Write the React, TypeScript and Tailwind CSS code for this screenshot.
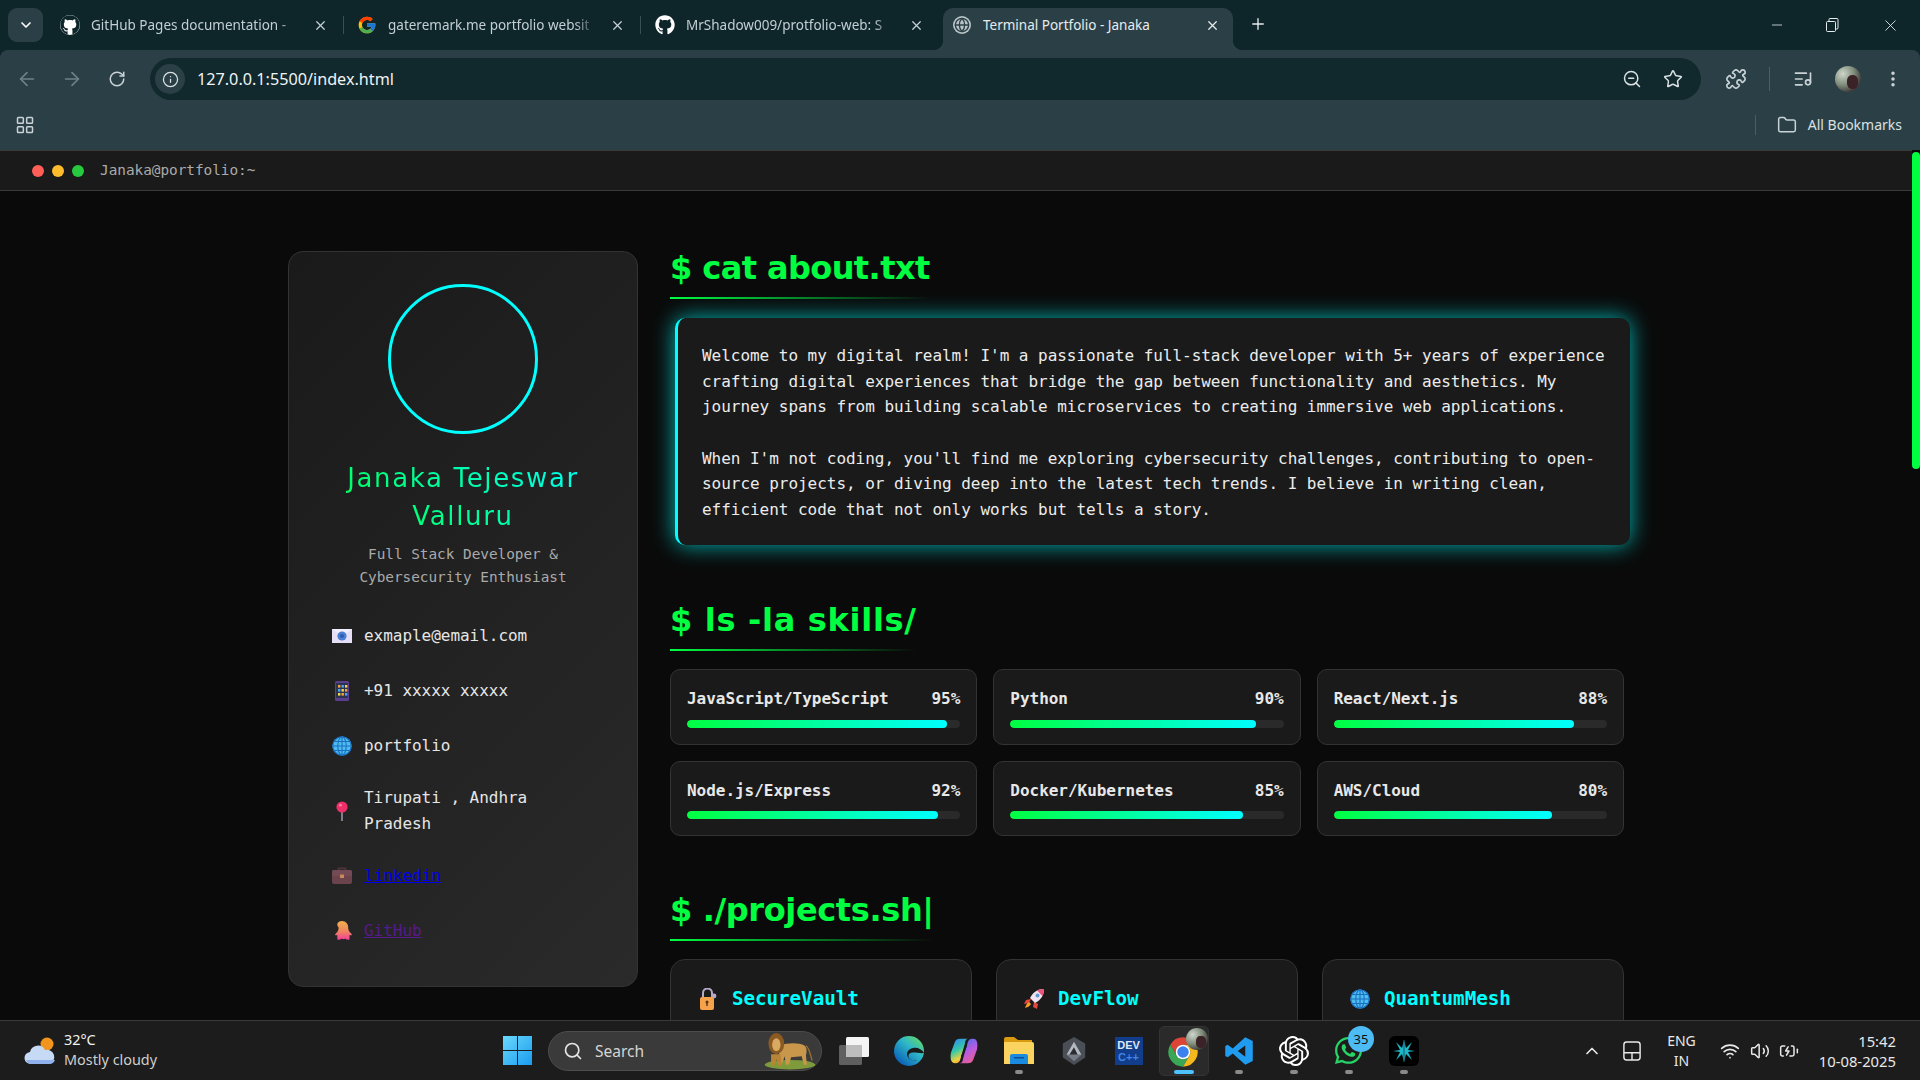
import React from 'react';
import {
  ArrowLeft, ArrowRight, RotateCw, Info, ZoomOut, Star, Puzzle, ListMusic, EllipsisVertical,
  LayoutGrid, Folder, Wifi, Volume2, BatteryCharging, ChevronUp, ChevronDown, Plus, X, Minus, Search, Globe,
} from 'lucide-react';
import { FaGithub, FaWhatsapp } from 'react-icons/fa';
import { FcGoogle } from 'react-icons/fc';
import { SiOpenai } from 'react-icons/si';

const skills = [
  { name: 'JavaScript/TypeScript', pct: 95 },
  { name: 'Python', pct: 90 },
  { name: 'React/Next.js', pct: 88 },
  { name: 'Node.js/Express', pct: 92 },
  { name: 'Docker/Kubernetes', pct: 85 },
  { name: 'AWS/Cloud', pct: 80 },
];

/* ---- small emoji style drawings ---- */
const MailEmoji = () => (
  <svg viewBox="0 0 20 14" className="w-5 h-[14px]">
    <rect width="20" height="14" fill="#e6dff6" />
    <path d="M0 0 L10 7 L20 0" fill="#f3eefc" />
    <circle cx="10" cy="7" r="4.6" fill="#4b7fd6" />
    <circle cx="10" cy="7" r="2" fill="#2c5bb0" />
  </svg>
);

const PhoneEmoji = () => (
  <svg viewBox="0 0 14 20" className="w-[14px] h-5">
    <rect width="14" height="20" rx="1.5" fill="#5b3f8e" />
    <rect x="1" y="2" width="12" height="15" fill="#2c3350" />
    {[3, 6.5, 10].map((x, i) =>
      [4, 8, 12].map((y, j) => (
        <rect key={`${i}-${j}`} x={x} y={y} width="2.4" height="2.6" fill={['#f2a33a', '#4fa8e8', '#f5d547'][(i + j) % 3]} />
      )),
    )}
  </svg>
);

const GlobeEmoji = ({ size = 20 }: { size?: number }) => (
  <svg viewBox="0 0 20 20" width={size} height={size}>
    <circle cx="10" cy="10" r="9.6" fill="#4dbdf0" />
    <g fill="none" stroke="#1a6fc0" strokeWidth="1.1">
      <circle cx="10" cy="10" r="9.2" />
      <ellipse cx="10" cy="10" rx="4.2" ry="9.2" />
      <path d="M10 .8V19.2M.8 10H19.2M2 5.5H18M2 14.5H18" />
    </g>
  </svg>
);

const PinEmoji = () => (
  <svg viewBox="0 0 14 20" className="w-[14px] h-5">
    <rect x="6.2" y="9" width="1.6" height="11" fill="#9a93a8" />
    <circle cx="7" cy="6" r="5.6" fill="#ef2f68" />
    <circle cx="5.4" cy="4.2" r="1.4" fill="#ff7fa3" />
  </svg>
);

const CaseEmoji = () => (
  <svg viewBox="0 0 20 17" className="w-5 h-[17px]">
    <path d="M6.5 3V1.4h7V3" fill="none" stroke="#4f353b" strokeWidth="1.6" />
    <rect y="3" width="20" height="14" rx="2" fill="#6b434d" />
    <rect y="3" width="20" height="6" rx="2" fill="#744b55" />
    <rect x="8" y="7.5" width="4" height="3.5" rx=".6" fill="#c78a5c" />
  </svg>
);

const OctoEmoji = () => (
  <svg viewBox="0 0 20 19" className="w-5 h-[19px]">
    <defs>
      <linearGradient id="octo" x1="0" y1="0" x2="0" y2="1">
        <stop offset="0" stopColor="#f2b04c" />
        <stop offset="0.55" stopColor="#f0855f" />
        <stop offset="1" stopColor="#f23f9a" />
      </linearGradient>
    </defs>
    <path d="M10 0c4 0 6.2 3 6.2 6.5 0 2 .6 3.6 2 5 1 1 1.8 2 1.8 2.6-.8.3-1.8.3-2.6 0 .2 1.6.2 3 0 4.4-1.6.4-3.2.2-4.2-1-1 .9-2.4.9-3.4 0-1.2 1.2-2.8 1.4-4.4 1-.2-1.4-.2-2.8 0-4.4-.8.3-1.8.3-2.4 0 0-.6.8-1.6 1.8-2.6 1.4-1.4 1.8-3 1.8-5C3.800 3 6 0 10 0z" fill="url(#octo)" />
  </svg>
);

const LockEmoji = () => (
  <svg viewBox="0 0 18 22" className="w-[18px] h-[22px]">
    <path d="M4 9V5a4.500 4.500 0 0 1 9 0v4" fill="none" stroke="#b7a9c9" strokeWidth="2" />
    <circle cx="15" cy="8" r="2.400" fill="#b7a9c9" />
    <rect x="1" y="9" width="14" height="13" rx="2" fill="#f6a24a" />
    <circle cx="8" cy="14" r="1.500" fill="#5a3418" />
    <rect x="7.300" y="14" width="1.400" height="4" fill="#5a3418" />
  </svg>
);

const RocketEmoji = () => (
  <svg viewBox="0 0 22 22" className="w-[22px] h-[22px]">
    <path d="M8 11 3 12 1 16l5-1M11 14l-1 5 4 2 1-5" fill="#e8463c" />
    <path d="M21 1c-6 0-11 3-14 9l5 5c6-3 9-8 9-14z" fill="#eee3ee" />
    <path d="M21 1c-2.500 0-5 .5-7 1.500L19.500 8C20.500 6 21 3.500 21 1z" fill="#e8547c" />
    <circle cx="14.500" cy="7.500" r="2" fill="#5d9ad8" />
    <path d="M6 14c-2 1-3 3-4 6 3-1 5-2 6-4z" fill="#f6a02c" />
  </svg>
);

/* ---- browser and taskbar logos ---- */
const ChromeLogo = () => (
  <svg viewBox="0 0 24 24" className="w-[32px] h-[32px]">
    <path d="M12 6.500H21.530A11 11 0 0 0 2.470 6.500L7.240 14.750A5.500 5.500 0 0 1 12 6.500Z" fill="#db4437" />
    <path d="M7.240 14.750 2.470 6.500A11 11 0 0 0 12 23L16.760 14.750A5.500 5.500 0 0 1 7.240 14.750Z" fill="#3aa757" />
    <path d="M16.760 14.750 12 23A11 11 0 0 0 21.530 6.500H12A5.500 5.500 0 0 1 16.760 14.750Z" fill="#f5b81c" />
    <circle cx="12" cy="12" r="5.500" fill="#fff" />
    <circle cx="12" cy="12" r="4.300" fill="#3b82f0" />
  </svg>
);

const EdgeLogo = () => (
  <svg viewBox="0 0 30 30" className="w-[30px] h-[30px]">
    <defs>
      <linearGradient id="edge" x1="0.9" y1="0.1" x2="0.2" y2="0.9">
        <stop offset="0" stopColor="#5fd86a" />
        <stop offset="0.4" stopColor="#2fb8c8" />
        <stop offset="1" stopColor="#0b63b8" />
      </linearGradient>
    </defs>
    <circle cx="15" cy="15" r="15" fill="url(#edge)" />
    <path d="M30 17c-2-4-7-6-11-5-5 1-7 5-5.500 8.500 1.500 3.500 5.500 4.500 9.500 3.500-1.500 1-3 .500-5 0-3-.800-4-3-3.500-5 .500-1.500 2-2.500 4-2.500 5 0 8 1 11.500 .500z" fill="#1a1a1a" />
  </svg>
);

const CopilotLogo = () => (
  <svg viewBox="0 0 30 30" className="w-[28px] h-[28px]">
    <defs>
      <linearGradient id="copA" x1="0.2" y1="0" x2="0.6" y2="1">
        <stop offset="0" stopColor="#2f8df0" />
        <stop offset="0.45" stopColor="#36c8a8" />
        <stop offset="0.8" stopColor="#f2d23c" />
        <stop offset="1" stopColor="#f2803c" />
      </linearGradient>
      <linearGradient id="copB" x1="0.3" y1="0" x2="0.8" y2="1">
        <stop offset="0" stopColor="#4a70f0" />
        <stop offset="0.5" stopColor="#b95ce0" />
        <stop offset="1" stopColor="#f25c8c" />
      </linearGradient>
    </defs>
    <path d="M1 17 5 6C6 3 8 2 11 2H20C17 2 16.500 4 16 7L11 24C10.400 26.500 9 28 6 28H5C1 28 0 23 1 17Z" fill="url(#copA)" />
    <path d="M29 13 25 24C24 27 22 28 19 28H10C13 28 13.500 26 14 23L19 6C19.600 3.500 21 2 24 2H25C29 2 30 7 29 13Z" fill="url(#copB)" />
    <path d="M17.500 9 12.500 21" stroke="#1c1c1c" strokeWidth="1.600" strokeLinecap="round" />
  </svg>
);

const FolderLogo = () => (
  <svg viewBox="0 0 30 27" className="w-[30px] h-[27px]">
    <path d="M0 2a2 2 0 0 1 2-2h8l4 3h14v6H0z" fill="#d99a10" />
    <path d="M0 5h28a2 2 0 0 1 2 2v20H0z" fill="#fbd35f" />
    <path d="M6 19a2 2 0 0 1 2-2h14a2 2 0 0 1 2 2v8H6z" fill="#1b8be0" />
    <rect x="10" y="20" width="10" height="1.500" fill="#0b4f92" />
  </svg>
);

const ArcLogo = () => (
  <svg viewBox="0 0 26 30" className="w-[26px] h-[28px]">
    <polygon points="13,0 25,7 25,22 13,30 1,22 1,7" fill="#4a4f57" />
    <polygon points="13,5 21,19 5,19" fill="#b4b8bf" />
    <polygon points="13,11 17,19 8,19" fill="#2a2d33" />
    <polygon points="5,19 21,19 13,26" fill="#767b84" />
  </svg>
);

const VscodeLogo = () => (
  <svg viewBox="0 0 24 24" className="w-[30px] h-[30px]">
    <path d="M17 1 23 4V20L17 23 7 14 3 17 1 16V8L3 7 7 10ZM17 7.500 11 12 17 16.500Z" fill="#1f9cf0" fillRule="evenodd" />
  </svg>
);

const LastLogo = () => (
  <svg viewBox="0 0 30 30" className="w-[30px] h-[30px]">
    <rect width="30" height="30" rx="6" fill="#000" />
    <path d="M15 4 17 12 23 6 19 14 26 15 19 16 23 24 17 18 15 26 13 18 7 24 11 16 4 15 11 14 7 6 13 12Z" fill="#1fb6c6" />
    <path d="M14.500 4h1v22h-1z" fill="#0a5b66" />
  </svg>
);

const Lion = () => (
  <svg viewBox="0 0 50 36" className="w-[54px] h-[38px]">
    <ellipse cx="26" cy="31" rx="24" ry="4.500" fill="#7f9a3a" />
    <path d="M16 13c8-3 18-3 24 0 2 2 2 6 1 9l1 9h-3l-2-8-10 1-2 7h-3l-1-8-3 8h-3z" fill="#c9974c" />
    <path d="M41 13c4 3 4 9 6 14" stroke="#9a7132" strokeWidth="1.200" fill="none" />
    <ellipse cx="13" cy="11" rx="7.500" ry="10" fill="#8b5a22" />
    <ellipse cx="13" cy="12" rx="4" ry="6" fill="#d8aa62" />
    <path d="M8 21h9l1 11h-3l-2-6-2 6H8z" fill="#b88436" />
  </svg>
);

const Tab = ({ title, icon, width, pad, active, sep, fade }: { title: string; icon: React.ReactNode; width: string; pad: string; active?: boolean; sep?: boolean; fade?: boolean }) => (
  <div className={`relative flex items-center h-[42px] pb-[8px] shrink-0 ${width} ${pad} ${active ? 'pr-[13px] bg-[#2b4046] rounded-t-[10px] ml-[3px] text-[#e6ecee]' : 'pr-[16px] text-[#c3cfd2]'}`}>
    {active && (
      <>
        <span className="absolute right-[-10px] bottom-0 w-[10px] h-[10px] bg-[radial-gradient(circle_at_100%_0,transparent_10px,#2b4046_10.500px)]" />
        <span className="absolute left-[-10px] bottom-0 w-[10px] h-[10px] bg-[radial-gradient(circle_at_0_0,transparent_10px,#2b4046_10.500px)]" />
      </>
    )}
    <span className="w-5 h-5 shrink-0 flex items-center justify-center">{icon}</span>
    <span className={`flex-1 ml-[11px] whitespace-nowrap overflow-hidden text-[13.500px] leading-5 ${fade ? '[mask-image:linear-gradient(to_right,black_90%,transparent)]' : ''}`}>{title}</span>
    <X size={15} strokeWidth={2} className="ml-[14px] shrink-0" />
    {sep && <span className="absolute right-0 top-[8px] h-[18px] w-px bg-[#3a4f55]" />}
  </div>
);

const Avatar = ({ size }: { size: string }) => (
  <span className={`block rounded-full overflow-hidden ${size} bg-[radial-gradient(circle_at_30%_30%,#cfd6cc,#7d8a78_45%,#3d3a3a_75%)]`}>
    <span className="block w-[45%] h-[55%] mt-[35%] ml-[45%] rounded-[40%] bg-[#3a2226]" />
  </span>
);

const Heading = ({ children, spacing }: { children: React.ReactNode; spacing: string }) => (
  <h2 className={`relative w-fit h-[51.200px] text-[#00ff41] font-['DejaVu_Sans',sans-serif] font-bold text-[32px] leading-[53.200px] ${spacing}`}>
    {children}
    <span className="absolute left-0 right-0 bottom-[-6px] h-[2px] bg-[linear-gradient(90deg,#00ff41,transparent)]" />
  </h2>
);

const ContactRow = ({ icon, children }: { icon: React.ReactNode; children: React.ReactNode }) => (
  <div className="flex items-center">
    <span className="w-5 h-[30.720px] mr-[12px] shrink-0 flex items-center justify-center">{icon}</span>
    <span className="text-[#e6e6e6]">{children}</span>
  </div>
);

const SkillCard = ({ name, pct }: { name: string; pct: number }) => (
  <div className="bg-[#1a1a1a] border border-[#333] rounded-[10px] p-4">
    <div className="flex justify-between font-bold text-[#e8e8e8] mb-2 whitespace-nowrap">
      <span>{name}</span>
      <span>{pct}%</span>
    </div>
    <div className="h-2 rounded bg-[#2a2a2a] overflow-hidden">
      <div className="h-full rounded bg-[linear-gradient(90deg,#00ff41,#00ffff)]" style={{ width: `${pct}%` }} />
    </div>
  </div>
);

const ProjectCard = ({ icon, title }: { icon: React.ReactNode; title: string }) => (
  <div className="bg-[#1a1a1a] border border-[#333] rounded-[15px] h-[180px] pt-[24px] px-[26px]">
    <div className="flex items-center gap-[13px] text-[#00ffff] font-bold text-[19.200px] leading-[30px]">
      <span className="w-[22px] flex justify-center">{icon}</span>
      {title}
    </div>
  </div>
);

const TaskIcon = ({ children, dot }: { children: React.ReactNode; dot?: boolean }) => (
  <div className="relative w-[55px] h-full shrink-0 flex items-center justify-center">
    {children}
    {dot && <span className="absolute bottom-[6px] left-[24px] w-[8px] h-[4px] rounded-full bg-[#8a8a8a]" />}
  </div>
);

export default function App() {
  return (
    <div className="flex flex-col h-screen w-full overflow-hidden bg-[#0a0a0a] font-['DejaVu_Sans_Mono',monospace] text-[16px] leading-[25.600px] tracking-[-0.032px] text-[#e0e0e0]">
      {/* browser chrome */}
      <div className="shrink-0 bg-[#0e252a] font-['Noto_Sans',sans-serif] tracking-normal">
        <div className="relative flex items-end h-[50px] pl-[8px]">
          <div className="self-start mt-[8px] w-[35px] h-[34px] mr-[5px] rounded-[9px] bg-[#2b4046] flex items-center justify-center text-white">
            <ChevronDown size={16} strokeWidth={2.500} />
          </div>
          <Tab width="w-[296px]" pad="pl-[12px]" sep fade title="GitHub Pages documentation -" icon={
            <span className="relative w-5 h-5 rounded-full bg-white flex items-center justify-center"><FaGithub size={20} color="#0e252a" /></span>
          } />
          <Tab width="w-[297px]" pad="pl-[13px]" sep fade title="gateremark.me portfolio websit" icon={<FcGoogle size={20} />} />
          <Tab width="w-[299px]" pad="pl-[14px]" fade title="MrShadow009/protfolio-web: S" icon={<FaGithub size={20} color="#fff" />} />
          <Tab width="w-[290px]" pad="pl-[9px]" active title="Terminal Portfolio - Janaka" icon={
            <span className="w-[18px] h-[18px] rounded-full bg-[#b8c4c7] flex items-center justify-center"><Globe size={16} color="#2b4046" strokeWidth={2} /></span>
          } />
          <Plus size={18} strokeWidth={1.800} className="self-center ml-[16px] mt-[-2px] text-[#e6ecee]" />
          <div className="ml-auto self-start flex items-center h-[50px] text-[#e6ecee]">
            <Minus size={16} strokeWidth={1.200} className="mr-[40px]" />
            <svg viewBox="0 0 14 14" className="w-[14px] h-[14px] mr-[42px]" fill="none" stroke="currentColor" strokeWidth="1">
              <rect x="1.500" y="3.500" width="9" height="10" rx="1" />
              <path d="M4 3V1.500a1 1 0 0 1 1-1h7a1 1 0 0 1 1 1V10a1 1 0 0 1-1 1h-1.500" />
            </svg>
            <X size={19} strokeWidth={1.100} className="mr-[20px]" />
          </div>
        </div>

        <div className="bg-[#2b4046] rounded-t-[8px]">
          <div className="flex items-center h-[50px] pt-[8px] pl-[15px] text-[#c9d3d6]">
            <ArrowLeft size={22} strokeWidth={1.800} className="w-6 mr-[21px] text-[#6f8288]" />
            <ArrowRight size={22} strokeWidth={1.800} className="w-6 mr-[21px] text-[#6f8288]" />
            <RotateCw size={18} strokeWidth={2} className="w-6 mr-[21px]" />
            <div className="flex items-center w-[1551px] h-[42px] rounded-full bg-[#11282d] pl-[5px] pr-[18px] shrink-0 text-[#d8e0e2]">
              <span className="w-[30px] h-[30px] rounded-full bg-[#2b4046] flex items-center justify-center"><Info size={17} strokeWidth={1.800} /></span>
              <span className="ml-[12px] mt-[2px] text-[16.200px] text-[#f0f4f5]">127.0.0.1:5500/index.html</span>
              <ZoomOut size={20} strokeWidth={1.800} className="ml-auto mr-[21px]" />
              <Star size={20} strokeWidth={1.800} />
            </div>
            <Puzzle size={22} strokeWidth={1.800} className="w-6 ml-[23px]" />
            <span className="w-px h-[24px] ml-[21px] bg-[#4a5f65]" />
            <ListMusic size={20} strokeWidth={2} className="w-6 ml-[21px]" />
            <span className="ml-[20px]"><Avatar size="w-[26px] h-[26px]" /></span>
            <EllipsisVertical size={20} strokeWidth={2.200} className="w-6 ml-[20px]" />
          </div>
          <div className="flex items-center h-[50px] pl-[15px] pr-[18px] text-[#c9d3d6]">
            <LayoutGrid size={20} strokeWidth={1.800} />
            <span className="ml-auto w-px h-[20px] bg-[#4a5f65]" />
            <Folder size={20} strokeWidth={1.800} className="ml-[21px]" />
            <span className="ml-[11px] text-[14px] leading-5 text-[#d8e0e2]">All Bookmarks</span>
          </div>
        </div>
      </div>

      {/* page */}
      <div className="flex flex-1 min-h-0">
        <div className="flex flex-col flex-1 min-w-0">
          <div className="shrink-0 flex items-center h-[41px] pl-[32px] gap-2 bg-[#1a1a1a] border-y border-[#3a3a3a]">
            <span className="w-3 h-3 rounded-full bg-[#ff5f56]" />
            <span className="w-3 h-3 rounded-full bg-[#ffbd2e]" />
            <span className="w-3 h-3 rounded-full bg-[#27c93f]" />
            <span className="ml-[8px] text-[14.400px] text-[#aaa]">Janaka@portfolio:~</span>
          </div>

          <div className="flex-1 min-h-0 overflow-hidden">
            <div className="w-[1336px] mx-auto pt-[51px] flex gap-[32px] items-start">
              {/* profile */}
              <aside className="w-[350px] shrink-0 mt-[9px] rounded-[15px] border border-[#333] bg-[linear-gradient(135deg,#1a1a1a,#2a2a2a)] pt-[32px] px-[32px] pb-[40px]">
                <div className="w-[150px] h-[150px] mx-auto rounded-full border-[3px] border-[#00ffff]" />
                <h1 className="mt-[25px] text-center font-['DejaVu_Sans',sans-serif] text-[26px] leading-[38.400px] tracking-[1.650px] bg-[linear-gradient(45deg,#00ff41,#00ffff)] bg-clip-text text-transparent">
                  Janaka Tejeswar Valluru
                </h1>
                <p className="mt-[7px] text-center text-[14.400px] leading-[23.040px] text-[#aaa]">
                  Full Stack Developer &amp; Cybersecurity Enthusiast
                </p>
                <div className="mt-[32px] pl-[11px] pr-[20px] flex flex-col gap-[24px]">
                  <ContactRow icon={<MailEmoji />}>exmaple@email.com</ContactRow>
                  <ContactRow icon={<PhoneEmoji />}>+91 xxxxx xxxxx</ContactRow>
                  <ContactRow icon={<GlobeEmoji />}>portfolio</ContactRow>
                  <ContactRow icon={<PinEmoji />}>Tirupati , Andhra Pradesh</ContactRow>
                  <ContactRow icon={<CaseEmoji />}><a href="#linkedin" className="text-[#0000ee] underline">linkedin</a></ContactRow>
                  <ContactRow icon={<OctoEmoji />}><a href="#github" className="text-[#551a8b] underline">GitHub</a></ContactRow>
                </div>
              </aside>

              {/* terminal sections */}
              <main className="w-[954px] shrink-0">
                <Heading spacing="mb-[25px] tracking-[-0.580px]">$ cat about.txt</Heading>
                <div className="ml-[5px] w-[955px] mb-[48.600px] rounded-[10px] border-l-[3px] border-[#00ffff] bg-[#1a1a1a] pt-[25px] pb-[23px] px-[24px] shadow-[0_0_22px_rgba(0,255,255,0.7)] text-[#ececec]">
                  <p>Welcome to my digital realm! I'm a passionate full-stack developer with 5+ years of experience crafting digital experiences that bridge the gap between functionality and aesthetics. My journey spans from building scalable microservices to creating immersive web applications.</p>
                  <br />
                  <p>When I'm not coding, you'll find me exploring cybersecurity challenges, contributing to open-source projects, or diving deep into the latest tech trends. I believe in writing clean, efficient code that not only works but tells a story.</p>
                </div>

                <Heading spacing="mb-[24px] tracking-[0.700px]">$ ls -la skills/</Heading>
                <div className="grid grid-cols-3 gap-4 mb-[47.600px]">
                  {skills.map((s) => <SkillCard key={s.name} {...s} />)}
                </div>

                <Heading spacing="mb-[24px] tracking-[-0.370px]">$ ./projects.sh|</Heading>
                <div className="grid grid-cols-3 gap-6">
                  <ProjectCard icon={<LockEmoji />} title="SecureVault" />
                  <ProjectCard icon={<RocketEmoji />} title="DevFlow" />
                  <ProjectCard icon={<GlobeEmoji size={20} />} title="QuantumMesh" />
                </div>
              </main>
            </div>
          </div>
        </div>

        {/* page scrollbar */}
        <div className="w-2 shrink-0 pt-[2px]">
          <div className="h-[317px] rounded-[4px] bg-[#00ff41]" />
        </div>
      </div>

      {/* windows taskbar */}
      <div className="shrink-0 flex items-center h-[60px] bg-[#1c1c1c] border-t border-[#3a3a3a] font-['Noto_Sans',sans-serif] text-[14.400px] leading-5 tracking-normal text-[#e8e8e8]">
        <div className="w-[503px] shrink-0 flex items-center pl-[24px]">
          <svg viewBox="0 0 32 30" className="w-[32px] h-[30px]">
            <circle cx="23" cy="8" r="6.500" fill="#f2951f" />
            <path d="M7 28a6 6 0 0 1-1-12 8 8 0 0 1 15-2 6.500 6.500 0 0 1 4 14z" fill="#c6d9f5" />
            <path d="M7 28a6 6 0 0 1-5-4h29a6 6 0 0 1-6 4z" fill="#8fb0ea" />
          </svg>
          <div className="ml-[8px] mt-[-2px]">
            <div className="text-[#f2f2f2]">32°C</div>
            <div className="text-[#cfcfcf]">Mostly cloudy</div>
          </div>
        </div>
        <svg viewBox="0 0 29 29" className="w-[29px] h-[29px] shrink-0">
          <defs>
            <linearGradient id="win" x1="0" y1="0" x2="1" y2="1">
              <stop offset="0" stopColor="#6ad9fb" />
              <stop offset="1" stopColor="#1a9bf0" />
            </linearGradient>
          </defs>
          <path d="M0 0h14v14H0zM15 0h14v14H15zM0 15h14v14H0zM15 15h14v14H15z" fill="url(#win)" />
        </svg>
        <div className="relative ml-[16px] w-[274px] h-[40px] shrink-0 flex items-center rounded-full bg-[#3a3a3a] border border-[#4c4c4c] pl-[14px]">
          <Search size={20} strokeWidth={2} className="text-[#e4e4e4]" />
          <span className="ml-[12px] text-[15.500px] text-[#d4d4d4]">Search</span>
          <span className="absolute right-[5px] top-[0px]"><Lion /></span>
        </div>
        <div className="ml-[4px] flex h-full">
          <TaskIcon>
            <svg viewBox="0 0 30 28" className="w-[30px] h-[28px]">
              <rect y="8" width="23" height="20" rx="1.500" fill="#5f5f5f" />
              <rect x="7" width="23" height="20" rx="1.500" fill="#f4f4f4" />
              <rect x="7" y="8" width="16" height="12" fill="#bdbdbd" />
            </svg>
          </TaskIcon>
          <TaskIcon><EdgeLogo /></TaskIcon>
          <TaskIcon><CopilotLogo /></TaskIcon>
          <TaskIcon dot><FolderLogo /></TaskIcon>
          <TaskIcon><ArcLogo /></TaskIcon>
          <TaskIcon>
            <div className="w-[28px] h-[28px] bg-[#123d8a] flex flex-col items-center justify-center font-['Liberation_Sans',sans-serif] font-bold text-[11px] leading-[12px]">
              <span className="text-[#dfe7f5]">DEV</span>
              <span className="text-[#3f86e8]">C++</span>
            </div>
          </TaskIcon>
          <TaskIcon>
            <span className="absolute left-[3px] top-[5px] w-[50px] h-[50px] rounded-[5px] bg-[#2a2a2a] border border-[#333]" />
            <span className="relative mt-[2px] mr-[2px]"><ChromeLogo /></span>
            <span className="absolute right-[3px] top-[7px]"><Avatar size="w-[22px] h-[22px]" /></span>
            <span className="absolute bottom-[6px] left-[18px] w-[20px] h-[4px] rounded-full bg-[#4dc2ff]" />
          </TaskIcon>
          <TaskIcon dot><VscodeLogo /></TaskIcon>
          <TaskIcon dot><SiOpenai size={30} color="#fff" /></TaskIcon>
          <TaskIcon dot>
            <FaWhatsapp size={31} color="#25d366" />
            <span className="absolute left-[27px] top-[5px] w-[26px] h-[26px] rounded-full bg-[#4dbcf5] text-[#101010] text-[13px] flex items-center justify-center">35</span>
          </TaskIcon>
          <TaskIcon dot><LastLogo /></TaskIcon>
        </div>
        <div className="ml-auto flex items-center pr-[24px]">
          <ChevronUp size={20} strokeWidth={2} className="mr-[21px]" />
          <svg viewBox="0 0 20 22" className="w-[18px] h-[20px] mr-[26px]" fill="none" stroke="currentColor" strokeWidth="1.600">
            <rect x="1" y="1" width="18" height="20" rx="3" />
            <path d="M1 13H19M10 13V21" />
          </svg>
          <div className="text-center text-[14px] mr-[24px]">
            <div>ENG</div>
            <div>IN</div>
          </div>
          <Wifi size={20} strokeWidth={2} className="mr-[10px]" />
          <Volume2 size={20} strokeWidth={1.800} className="mr-[9px]" />
          <BatteryCharging size={20} strokeWidth={1.800} className="mr-[20px]" />
          <div className="text-right text-[14.800px]">
            <div>15:42</div>
            <div>10-08-2025</div>
          </div>
        </div>
      </div>
    </div>
  );
}
